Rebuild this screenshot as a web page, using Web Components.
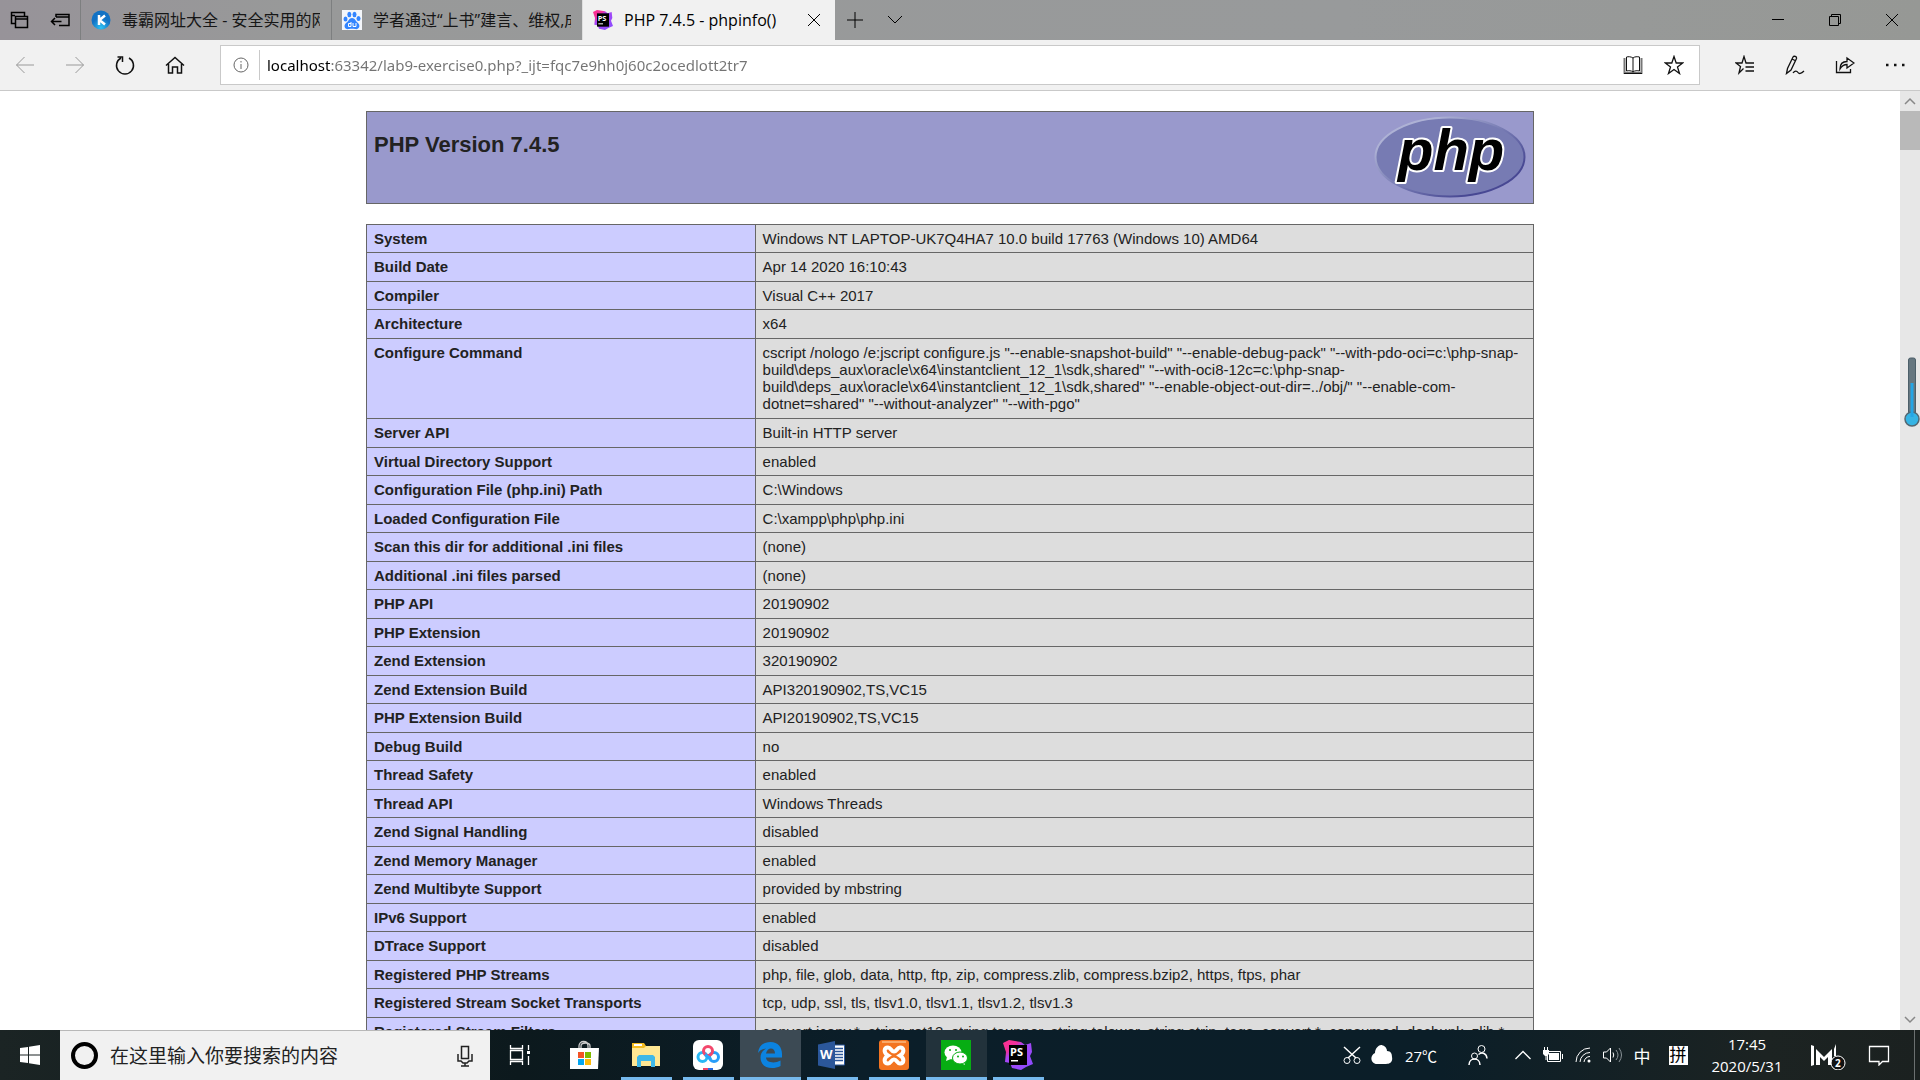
<!DOCTYPE html>
<html lang="zh-CN">
<head>
<meta charset="utf-8">
<title>PHP 7.4.5 - phpinfo()</title>
<style>
html, body { margin: 0; height: 100%; }
body { overflow: hidden; font-family: "Open Sans", "Noto Sans CJK SC", sans-serif; }
</style>
</head>
<body>
<desktop-screen></desktop-screen>
<script>
const line = (w, h, body, extra = '') => `<svg width="${w}" height="${h}" viewBox="0 0 ${w} ${h}" fill="none" stroke="currentColor" aria-hidden="true" ${extra}>${body}</svg>`;
const ICONS = {
  tabs: line(20, 20, '<path d="M5 13.500H1.500V2.500h13V6M1 5.500h4M5.500 6.500h12v11h-12zM5.500 9h12" stroke-width="1.500"/>'),
  aside: line(20, 16, '<path d="M6 5V2.500h13v11H9M6 5h13M1.500 9.500h10M5 6L1.500 9.500 5 13" stroke-width="1.500"/>'),
  close: line(14, 14, '<path d="M1 1l12 12M13 1L1 13"/>'),
  plus: line(18, 18, '<path d="M9 1v16M1 9h16"/>'),
  down: line(16, 10, '<path d="M1 1l7 7 7-7"/>'),
  min: line(12, 12, '<path d="M0 5.500h12"/>'),
  restore: line(14, 14, '<path d="M3.500 3.500V1.500h9v9h-2M1.500 3.500h9v9h-9z"/>'),
  exit: line(12, 12, '<path d="M0 0l12 12M12 0L0 12"/>'),
  back: line(20, 18, '<path d="M19 9H1.500M9.500 1l-8 8 8 8"/>'),
  forward: line(20, 18, '<path d="M1 9h17.500M10.500 1l8 8-8 8"/>'),
  refresh: line(20, 20, '<path d="M14 3a8.500 8.500 0 1 1-8 0M2.500 2h5v5" stroke-width="1.500"/>'),
  home: line(20, 18, '<path d="M1 9.500l9-8 9 8M3.500 8v9h4v-6h5v6h4V8" stroke-width="1.500"/>'),
  info: line(16, 16, '<circle cx="8" cy="8" r="7"/><path d="M8 7v5M8 4v1.500"/>'),
  reader: line(20, 20, '<path d="M1.500 3v15h17V3" stroke="#777" stroke-width="2"/><path d="M10 3C8 1.500 5 1.500 3.500 2v14c2-.5 5-.5 6.500 1 1.500-1.500 4.500-1.500 6.500-1V2c-2-.5-5-.5-6.500 1zM10 3v14" /><path d="M1 18.500h18"/>'),
  star: line(20, 20, '<path d="M10 1.500l2.200 6.500h6.500l-5.200 4 2 6.500L10 14.500l-5.500 4 2-6.500-5.200-4h6.500z" stroke-width="1.300"/>'),
  hub: line(20, 20, '<path d="M8.500 13.500L4 18l1.500-6.500L1 8h6L9 1.500 11 8h8M10.500 12H19M10.500 16H19" stroke-width="1.300"/>'),
  pen: line(20, 20, '<path d="M1.500 18.500l1-5L8 2c1-1.500 4-.5 3.500 1.500L6 15zM7 4l4 2M1.500 18.500L6 15M8 18c2-3 4-2 5-.5s3 1.500 6-1.500" stroke-width="1.300"/>'),
  share: line(20, 18, '<path d="M1.500 5v11.500h14V13M5 13c0-5 3-7.500 7-7.500V2l7 5-7 5V8.500c-3 0-5 1-7 4.500z" stroke-width="1.300"/>'),
  more: line(20, 4, '<path d="M1 2h2.500M9 2h2.500M17 2h2.500" stroke-width="2.500"/>'),
  up: line(12, 8, '<path d="M1 7l5-5 5 5" stroke-width="1.500"/>'),
  scrolldown: line(12, 8, '<path d="M1 1l5 5 5-5" stroke-width="1.500"/>'),
  kingsoft: `<svg width="20" height="20" viewBox="0 0 20 20" aria-hidden="true"><defs><radialGradient id="k" cy=".9"><stop offset="0" stop-color="#2ec2f4"/><stop offset="1" stop-color="#1272c4"/></radialGradient></defs><circle cx="10" cy="10" r="9.500" fill="url(#k)"/><path d="M8 5v10M14 5.500L8.500 10l5.500 4.500" stroke="#fff" stroke-width="2.500" fill="none"/></svg>`,
  paw: `<svg width="20" height="20" viewBox="0 0 20 20" fill="#3385ff" aria-hidden="true"><path fill="#f4f6fa" d="M0 0h20v20H0z"/><ellipse cx="3.500" cy="9" rx="2" ry="2.600"/><ellipse cx="7.300" cy="4.500" rx="2" ry="2.700"/><ellipse cx="12.500" cy="4.500" rx="2" ry="2.700"/><ellipse cx="16.500" cy="8.500" rx="2" ry="2.600"/><path d="M10 8c3 0 3.500 3 5.500 4.500 4 3.500 1 7.500-2.500 6.500-2-.5-4-.5-6 0-4 1-6-3-3-6 3-2 3-5 6-5z"/><path d="M9 12v4.500H6.500v-3H9M11 13v3.500h3V13" fill="none" stroke="#fff"/></svg>`,
  storm: `<svg width="30" height="30" viewBox="0 0 30 30" aria-hidden="true"><defs><linearGradient id="s" x2=".9" y2="1"><stop stop-color="#ff318c"/><stop offset=".28" stop-color="#f0309d"/><stop offset=".4" stop-color="#a846f5"/><stop offset="1" stop-color="#8b4cff"/></linearGradient></defs><path fill="url(#s)" d="M0 3L6 0l12 2 4 3 6-2 1 9-2 4 3 8-7 3-5 3-9-2-2-5-5-1 1-10z"/><path d="M6 5h18v20H6z"/><text x="7" y="16" font-family="Open Sans" font-size="11" font-weight="700" fill="#fff">PS</text><path fill="#fff" d="M8 20h7v1.500H8z"/></svg>`,
  windows: `<svg width="20" height="20" viewBox="0 0 20 20" fill="#fff" aria-hidden="true"><path d="M0 3l8-1v7.500H0zM9 1.800L20 0v9.500H9zM0 10.500h8V18l-8-1zM9 10.500h11V20L9 18.200z"/></svg>`,
  mic: line(18, 22, '<path d="M5.500 1.500h7v12h-7zM2 9v7h3l2 2h4l2-2h3V9M9 18v3M5 21h8" stroke-width="1.500"/>'),
  taskview: line(22, 22, '<path d="M1.500 1v3.500h12V1M1.500 6.500h12v9h-12zM1.500 21v-3.500h12V21M19.500 1v5M19.500 12v9" stroke-width="1.300"/><path d="M18 7h3v3h-3z" fill="currentColor" stroke="none"/>'),
  store: `<svg width="30" height="30" viewBox="0 0 30 30" aria-hidden="true"><path d="M10 8V6c0-6 9-6 9 0v2M12 8V6c0-4 9-4 9 0v2" fill="none" stroke="#ccc" stroke-width="1.300"/><path fill="#fff" d="M1 8h29l-1 21H1z"/><path fill="#f35325" d="M9 12h6v6H9z"/><path fill="#7fba00" d="M16 12h6v6h-6z"/><path fill="#05a6f0" d="M9 19h6v6H9z"/><path fill="#ffba08" d="M16 19h6v6h-6z"/></svg>`,
  folder: `<svg width="28" height="24" viewBox="0 0 28 24" aria-hidden="true"><path fill="#f5bd22" d="M0 0h12l2 3h14v20H0z"/><path fill="#fff" d="M2 1h8v2H2z"/><path fill="#ffe793" d="M0 5h12l2-2h14v20H0z"/><path fill="#3fb8e8" d="M5 24V14l2-2h14l2 2v10h-4v-6H9v6z"/></svg>`,
  netdisk: `<svg width="30" height="30" viewBox="0 0 30 30" aria-hidden="true"><rect width="30" height="30" rx="6" fill="#fff"/><g fill="none" stroke-width="3"><circle cx="9.500" cy="17" r="4.500" stroke="#29b8f5"/><circle cx="21" cy="17" r="4.500" stroke="#279dfa"/><circle cx="15" cy="11" r="4.500" stroke="#f3476c"/><path stroke="#28a8fa" d="M12 14.500l6 5"/></g><path fill="#f04468" d="M10 28h5v2h-5z"/><path fill="#286bdf" d="M15 28h5v2h-5z"/></svg>`,
  edge: `<svg width="26" height="28" viewBox="0 0 26 28" fill="#0c83e0" aria-hidden="true"><path d="M1 12C2 4 7 1 13.500 1 21 1 25 6.500 25 13v3.500H9c0 5 8.500 6.500 14.500 3v5.500c-9 4.500-20 1.500-20-8.500 0-4 2-7 5.500-9C5 8 3 9.500 1 12zM9 12.500h9c0-7-8-6.500-9 0z"/></svg>`,
  word: `<svg width="28" height="28" viewBox="0 0 28 28" aria-hidden="true"><path fill="#fff" stroke="#2b579a" d="M14 4h12.500v20H14z"/><path d="M17 7.500h8M17 10.500h8M17 13.500h8M17 16.500h8M17 19.500h8" stroke="#2b579a" stroke-width="1.500"/><path fill="#2b579a" d="M0 3.500L17 0v28L0 24.500z"/><text x="2" y="18" font-family="Open Sans" font-size="13" font-weight="700" fill="#fff">W</text></svg>`,
  xampp: `<svg width="30" height="30" viewBox="0 0 30 30" aria-hidden="true"><rect width="30" height="30" rx="3" fill="#f37421"/><path fill="#f9a868" d="M3 1h24v2H3z"/><path fill="none" stroke="#fff" stroke-width="4" d="M9 15.500c-5-3-4-8 0-8 3 0 3 4 6 4s3-4 6-4c4 0 5 5 0 8 5 3 4 8 0 8-3 0-3-4-6-4s-3 4-6 4c-4 0-5-5 0-8z"/></svg>`,
  wechat: `<svg width="30" height="30" viewBox="0 0 30 30" aria-hidden="true"><path fill="#07ad13" d="M0 0h30v30H0z"/><g fill="#fff"><ellipse cx="12" cy="12.500" rx="8.500" ry="7"/><path d="M6 17l-1 4 5-2zM23 22l1 3-4-2z"/><ellipse cx="19" cy="18" rx="7.500" ry="6" stroke="#07ad13"/></g><g fill="#07ad13"><circle cx="9" cy="10" r="1"/><circle cx="15" cy="10" r="1"/><circle cx="17" cy="16.500" r="1"/><circle cx="22" cy="16.500" r="1"/></g></svg>`,
  cut: line(18, 20, '<path d="M1 2l12 11M17 2L5 13" stroke-width="1.500"/><circle cx="4" cy="15.500" r="3"/><circle cx="14" cy="15.500" r="3"/>'),
  cloud: `<svg width="22" height="20" viewBox="0 0 22 20" fill="#fff" aria-hidden="true"><path d="M4 8C4 3 8 0 10 0s6 2 6 6c4 0 5 3 5 6 1 5-2 7-6 7H6c-6 0-8-8-2-11z"/></svg>`,
  people: line(20, 22, '<circle cx="13.500" cy="5" r="3.500"/><circle cx="6.500" cy="12" r="3"/><path d="M1 21c0-8 11-8 11 0M10.500 10.500c4-3 8-1 8.500 4" stroke-width="1.500"/>'),
  caret: line(18, 10, '<path d="M1.500 9L9 1.500 16.500 9" stroke-width="1.300"/>'),
  battery: line(22, 18, '<path d="M5.500 5.500h13v10h-13zM20.500 8v5"/><path d="M7 7h10v7H7zM1 4h6v4l-2 2H3L1 8z" fill="currentColor" stroke="none"/><path d="M2.500 1v3M5.500 1v3M4 9v5"/>'),
  wifi: line(18, 18, '<path d="M2 16A14 14 0 0 1 16 2M6 16A10 10 0 0 1 16 6.500M10 16a6 6 0 0 1 6-5.500"/><circle cx="15" cy="15" r="1.500" fill="currentColor" stroke="none"/>'),
  sound: line(22, 18, '<path d="M1.500 6h3l4-4v14l-4-4h-3zM11 6.500q1.500 2.500 0 5"/><path d="M14 4q4 5 0 10M17 2q5 7 0 14" stroke="#8b9499"/>'),
  mlogo: line(38, 30, '<path d="M2 5l3 1v19l-3 1zM7 25V9l8 8 8-8v16h-4v-8l-4 4-4-4v8zM25 9l2-5v12h-2z" fill="currentColor" stroke="none"/><circle cx="29" cy="23" r="7" fill="#111"/><text x="26" y="27" font-family="Open Sans" font-size="10" font-weight="700" fill="#fff" stroke="none">2</text>'),
  notes: line(22, 22, '<path d="M1.500 2.500h19v15h-6L11 21v-3.500H1.500z" stroke-width="1.300"/>'),
  php: `<svg width="152" height="82" viewBox="0 0 152 82" role="img" aria-label="PHP logo"><defs><linearGradient id="rim" x2="1" y2="1"><stop offset=".2" stop-color="#aeb2d5"/><stop offset=".5" stop-color="#777bb3"/><stop offset=".8" stop-color="#484893"/></linearGradient></defs><ellipse cx="76" cy="41" rx="74.500" ry="39.500" fill="#777bb3" stroke="url(#rim)" stroke-width="2"/><text x="24" y="54" font-family="Liberation Sans" font-style="italic" font-weight="700" font-size="58" stroke="#fff" stroke-width="4" paint-order="stroke" stroke-linejoin="round">php</text></svg>`,
  thermo: `<svg width="16" height="70" viewBox="0 0 16 70" aria-hidden="true"><rect x="4.500" y="1" width="7" height="60" rx="2" fill="#667780" stroke="#4c5f69"/><circle cx="8" cy="62" r="7" fill="#36b4e4" stroke="#526873" stroke-width="1.500"/><path d="M8 26v34" stroke="#24a5e5" stroke-width="3"/></svg>`
};

const define = (name, template, setup) => customElements.define(name, class extends HTMLElement {
  connectedCallback() {
    if (this.shadowRoot) return;
    const root = this.attachShadow({ mode: 'open' });
    root.innerHTML = `<style>:host{box-sizing:border-box}*,*::before{box-sizing:border-box}button{font:inherit;color:inherit;background:none;border:0;padding:0;margin:0}svg{display:block}</style>` + (typeof template === 'function' ? template(this) : template);
    if (setup) setup(this, root);
  }
});

define('ui-icon', el => `<style>:host{display:block;flex:none}svg{width:var(--icon-width,auto);height:var(--icon-height,auto)}</style>${ICONS[el.getAttribute('name')]}`);

define('icon-button', el => `<style>
:host{display:flex;flex:none;width:50px;height:100%}
button{width:100%;height:100%;display:flex;align-items:center;justify-content:center}
</style><button aria-label="${el.getAttribute('label')}"><ui-icon name="${el.getAttribute('icon')}"></ui-icon></button>`);

define('browser-tab', el => `<style>
:host{display:flex;align-items:center;flex:none;width:251px;height:40px;padding:0 11px 0 10px;border-left:1px solid #7d7f80;font-size:16px;color:#161616}
:host([active]){width:253px;background:#f1f1f1;border-left-color:#dfdfdf;color:#000}
ui-icon{--icon-width:20px;--icon-height:20px;margin-right:11px}
button{flex:1;min-width:0;text-align:left;overflow:hidden;white-space:nowrap;height:40px;line-height:38px}
icon-button{width:20px}
</style><ui-icon name="${el.getAttribute('icon')}"></ui-icon><button role="tab"><slot></slot></button>${el.hasAttribute('active') ? '<icon-button icon="close" label="关闭标签页"></icon-button>' : ''}`);

define('title-bar', `<style>
:host{display:flex;flex:none;height:40px;background:linear-gradient(90deg,#979399,#989999 15%,#989a9b 70%,#969895);color:#000}
.tools{display:flex;width:80px;flex:none}
.tools icon-button{width:40px}
.add{width:40px}
.window{display:flex;margin-left:auto}
.window icon-button{width:57px}
</style>
<div class="tools"><icon-button icon="tabs" label="标签页"></icon-button><icon-button icon="aside" label="搁置标签页"></icon-button></div>
<browser-tab icon="kingsoft">毒霸网址大全 - 安全实用的网址导航</browser-tab>
<browser-tab icon="paw">学者通过“上书”建言、维权,成效</browser-tab>
<browser-tab icon="storm" active>PHP 7.4.5 - phpinfo()</browser-tab>
<icon-button class="add" icon="plus" label="新建标签页"></icon-button>
<icon-button class="add" icon="down" label="标签页预览"></icon-button>
<div class="window"><icon-button icon="min" label="最小化"></icon-button><icon-button icon="restore" label="还原"></icon-button><icon-button icon="exit" label="关闭"></icon-button></div>`);

define('address-field', `<style>
:host{display:flex;align-items:center;flex:1;height:40px;border:1px solid #c9c9c9;background:#fff;padding-right:5px}
ui-icon{margin:0 10px 0 12px;color:#666}
.rule{display:flex;flex:1;border-left:1px solid #c9c9c9}
input{flex:1;min-width:0;height:30px;border:0;padding:0 0 0 7px;outline:0;font:15px "Noto Sans",sans-serif;color:#737373;-webkit-text-fill-color:transparent;background:linear-gradient(90deg,#000 71px,#737373 71px);background-clip:text;-webkit-background-clip:text}
icon-button{width:41px}
</style><ui-icon name="info"></ui-icon><div class="rule"><input aria-label="地址" value="localhost:63342/lab9-exercise0.php?_ijt=fqc7e9hh0j60c2ocedlott2tr7"></div>
<icon-button icon="reader" label="阅读视图"></icon-button><icon-button icon="star" label="收藏"></icon-button>`);

define('tool-bar', `<style>
:host{display:flex;align-items:center;flex:none;height:51px;background:#f1f1f1;border-bottom:1px solid #c9c9c9;color:#111}
.dim{color:#999}
address-field{margin:0 20px}
</style>
<icon-button class="dim" icon="back" label="后退"></icon-button><icon-button class="dim" icon="forward" label="前进"></icon-button>
<icon-button icon="refresh" label="刷新"></icon-button><icon-button icon="home" label="主页"></icon-button>
<address-field></address-field>
<icon-button icon="hub" label="收藏夹"></icon-button><icon-button icon="pen" label="添加笔记"></icon-button>
<icon-button icon="share" label="共享"></icon-button><icon-button icon="more" label="更多"></icon-button>`);

const ROWS = [
  ['System', 'Windows NT LAPTOP-UK7Q4HA7 10.0 build 17763 (Windows 10) AMD64'],
  ['Build Date', 'Apr 14 2020 16:10:43'],
  ['Compiler', 'Visual C++ 2017'],
  ['Architecture', 'x64'],
  ['Configure Command', 'cscript /nologo /e:jscript configure.js "--enable-snapshot-build" "--enable-debug-pack" "--with-pdo-oci=c:\\php-snap-build\\deps_aux\\oracle\\x64\\instantclient_12_1\\sdk,shared" "--with-oci8-12c=c:\\php-snap-build\\deps_aux\\oracle\\x64\\instantclient_12_1\\sdk,shared" "--enable-object-out-dir=../obj/" "--enable-com-dotnet=shared" "--without-analyzer" "--with-pgo"'],
  ['Server API', 'Built-in HTTP server'],
  ['Virtual Directory Support', 'enabled'],
  ['Configuration File (php.ini) Path', 'C:\\Windows'],
  ['Loaded Configuration File', 'C:\\xampp\\php\\php.ini'],
  ['Scan this dir for additional .ini files', '(none)'],
  ['Additional .ini files parsed', '(none)'],
  ['PHP API', '20190902'],
  ['PHP Extension', '20190902'],
  ['Zend Extension', '320190902'],
  ['Zend Extension Build', 'API320190902,TS,VC15'],
  ['PHP Extension Build', 'API20190902,TS,VC15'],
  ['Debug Build', 'no'],
  ['Thread Safety', 'enabled'],
  ['Thread API', 'Windows Threads'],
  ['Zend Signal Handling', 'disabled'],
  ['Zend Memory Manager', 'enabled'],
  ['Zend Multibyte Support', 'provided by mbstring'],
  ['IPv6 Support', 'enabled'],
  ['DTrace Support', 'disabled'],
  ['Registered PHP Streams', 'php, file, glob, data, http, ftp, zip, compress.zlib, compress.bzip2, https, ftps, phar'],
  ['Registered Stream Socket Transports', 'tcp, udp, ssl, tls, tlsv1.0, tlsv1.1, tlsv1.2, tlsv1.3'],
  ['Registered Stream Filters', 'convert.iconv.*, string.rot13, string.toupper, string.tolower, string.strip_tags, convert.*, consumed, dechunk, zlib.*']
];

define('php-info', `<style>
:host{display:block;flex:1;min-width:0;overflow:hidden;padding-top:20px;background:#fff;color:#222;font-family:"Liberation Sans",Arial,sans-serif}
header,table{width:100%;max-width:1168px;margin:0 auto 20px}
header{display:flex;justify-content:space-between;align-items:flex-start;height:93px;border:1px solid #666;background:#99c;padding:4px 7px 0 7px}
h1{margin:0;font-size:22px;line-height:28px;padding-top:15px}
table{border-collapse:collapse;table-layout:fixed;font-size:15px;line-height:17px}
col:first-child{width:33.3%}
tr{height:28px}
tr:nth-child(even){height:29px}
tr:nth-child(5){height:80px}
th,td{border:1px solid #666;text-align:left;vertical-align:top;padding:5px 7px}
th{background:#ccf}
td{background:#ddd;overflow-wrap:break-word}
</style>
<header><h1>PHP Version 7.4.5</h1><ui-icon name="php"></ui-icon></header>
<table><colgroup><col><col></colgroup><tbody></tbody></table>`, (el, root) => {
  const body = root.querySelector('tbody');
  for (const [key, value] of ROWS) {
    const row = body.insertRow();
    const head = document.createElement('th');
    head.scope = 'row';
    head.textContent = key;
    row.append(head);
    row.insertCell().textContent = value;
  }
});

define('scroll-rail', `<style>
:host{display:flex;flex-direction:column;flex:none;width:20px;background:#e7e7e7;position:relative;color:#888}
icon-button{width:20px;height:20px}
.thumb{height:39px;background:#b9b9b9}
.foot{margin-top:auto}
.gauge{position:absolute;top:266px;right:0}
</style><icon-button icon="up" label="向上滚动"></icon-button><div class="thumb"></div><icon-button class="foot" icon="scrolldown" label="向下滚动"></icon-button><ui-icon class="gauge" name="thermo"></ui-icon>`);

define('task-app', el => `<style>
:host{display:block;flex:none;width:61px;height:50px}
:host([active]){background:#3c4a54}
:host([alert]){background:#22323b}
button{width:100%;height:100%;display:flex;align-items:center;justify-content:center;padding-right:2px;position:relative}
:host([open]) button::before{content:"";position:absolute;bottom:0;left:5px;right:5px;height:3px;background:#76b9ed}
:host([active]) button::before,:host([alert]) button::before{left:0;right:0}
</style><button aria-label="${el.getAttribute('label')}"><ui-icon name="${el.getAttribute('icon')}"></ui-icon></button>`);

define('search-box', `<style>
:host{display:flex;align-items:center;flex:none;width:430px;height:50px;background:#f1f1f1;border-top:1px solid #b8b8b8;padding-left:11px;color:#222}
.ring{width:27px;height:27px;flex:none;border:4px solid #000;border-radius:50%}
input{flex:1;min-width:0;margin-left:12px;border:0;padding:0 0 2px;background:none;outline:0;height:40px;font:19px "Noto Sans CJK SC",sans-serif}
input::placeholder{color:#222;opacity:1}
</style><span class="ring"></span><input type="text" aria-label="搜索" placeholder="在这里输入你要搜索的内容"><icon-button icon="mic" label="语音"></icon-button>`);

define('system-tray', `<style>
:host{display:flex;align-items:center;height:50px;margin-left:auto;color:#fff;font-size:15px}
icon-button{width:30px}
.temp{width:48px;text-align:center}
.people{width:48px;margin:0 6px 0 9px}
.cn{width:28px;text-align:center;font-size:17px}
.pin{width:44px;display:flex;justify-content:center}
.pin span{width:19px;height:19px;background:#fff;color:#000;font-size:17px;line-height:18px;text-align:center}
.clock{width:94px;display:flex;flex-direction:column;line-height:22px;align-items:center}
.m{width:67px}
.notes{width:36px}
.peek{width:6px;height:50px;border-left:1px solid #6b7070;margin-left:17px}
</style>
<icon-button icon="cut" label="截图"></icon-button><icon-button icon="cloud" label="天气"></icon-button><span class="temp">27℃</span>
<icon-button class="people" icon="people" label="人脉"></icon-button>
<icon-button icon="caret" label="显示隐藏的图标"></icon-button><icon-button icon="battery" label="电源"></icon-button><icon-button icon="wifi" label="网络"></icon-button><icon-button icon="sound" label="音量"></icon-button>
<button class="cn">中</button><button class="pin"><span>拼</span></button>
<button class="clock"><span>17:45</span><span>2020/5/31</span></button>
<icon-button class="m" icon="mlogo" label="消息"></icon-button><icon-button class="notes" icon="notes" label="通知"></icon-button><span class="peek"></span>`);

define('task-bar', `<style>
:host{display:flex;flex:none;height:50px;background:linear-gradient(90deg,#1b2424,#0c191d 27%,#0b1e29 45%,#0b1e28 75%,#1c2322 92%,#1b2120);color:#fff}
.start{width:60px}
.view{width:60px;margin-right:4px}
.apps{display:flex;gap:1px}
</style>
<icon-button class="start" icon="windows" label="开始"></icon-button>
<search-box></search-box>
<icon-button class="view" icon="taskview" label="任务视图"></icon-button>
<div class="apps">
<task-app icon="store" label="Microsoft Store"></task-app>
<task-app open icon="folder" label="文件资源管理器"></task-app>
<task-app open icon="netdisk" label="百度网盘"></task-app>
<task-app open active icon="edge" label="Microsoft Edge"></task-app>
<task-app open icon="word" label="Word"></task-app>
<task-app open icon="xampp" label="XAMPP"></task-app>
<task-app open alert icon="wechat" label="微信"></task-app>
<task-app open icon="storm" label="PhpStorm"></task-app>
</div>
<system-tray></system-tray>`);

define('desktop-screen', `<style>
:host{display:flex;flex-direction:column;height:100vh}
main{display:flex;flex:1;min-height:0}
</style>
<title-bar></title-bar><tool-bar></tool-bar>
<main><php-info></php-info><scroll-rail></scroll-rail></main>
<task-bar></task-bar>`);
</script>
</body>
</html>
